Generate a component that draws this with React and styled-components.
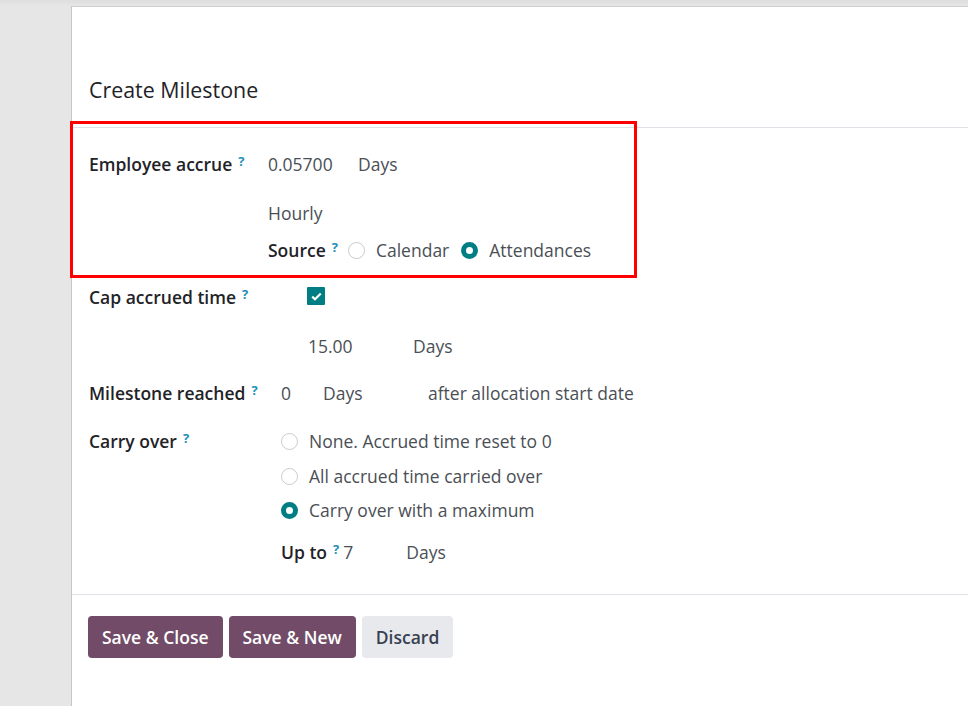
import React from "react";
import styled, { createGlobalStyle } from "styled-components";

const Global = createGlobalStyle`
  html, body { margin: 0; padding: 0; }
  body {
    background: #e6e6e6;
    font-family: "Open Sans", "Noto Sans", sans-serif;
    font-size: 17.5px;
    color: #495057;
    overflow: hidden;
  }
`;

const Page = styled.div`
  height: 706px;
  padding: 6px 0 0 71px;
  box-sizing: border-box;
  background: linear-gradient(#dedede, #e6e6e6 6px);
`;

const Modal = styled.div`
  background: #fff;
  border-left: 1px solid #c6c6c6;
  border-top: 1px solid #cfcfcf;
  height: 100%;
  box-sizing: border-box;
  display: flex;
  flex-direction: column;
`;

const Header = styled.div`
  height: 121px;
  box-sizing: border-box;
  display: flex;
  align-items: flex-end;
  padding: 0 17px 24px;
  border-bottom: 1px solid #dee2e6;
`;

const Title = styled.h4`
  margin: 0;
  font-size: 21.4px;
  line-height: 26px;
  font-weight: 500;
  color: #1f2328;
`;

const Body = styled.div`
  padding: 21px 17px 27px;
  border-bottom: 1px solid #dee2e6;
  display: flex;
  flex-direction: column;
`;

const Section = styled.div`
  position: relative;
  display: flex;
  flex-direction: column;
`;

const Highlight = styled.div`
  position: absolute;
  top: -28px;
  left: -19px;
  width: 567px;
  height: 157px;
  box-sizing: border-box;
  border: 3px solid #ff0000;
  pointer-events: none;
`;

const Line = styled.div`
  display: flex;
  align-items: ${(p) => (p.$top ? "flex-start" : "center")};
  height: ${(p) => (p.$top ? "auto" : "30px")};
  margin-top: ${(p) => p.$mt || 0}px;
  padding-left: ${(p) => p.$indent || 0}px;
`;

const Label = styled.div`
  width: ${(p) => p.$w}px;
  flex-shrink: 0;
  display: flex;
  align-items: center;
  height: 30px;
`;

const LabelText = styled.span`
  font-weight: 600;
  color: #1f2328;
  white-space: nowrap;
`;

const Help = styled.sup`
  color: #1b8fbb;
  font-weight: 700;
  font-size: 13px;
  margin-left: 6px;
  margin-right: ${(p) => p.$mr || 0}px;
  position: relative;
  top: -3px;
`;

const Value = styled.span`
  width: ${(p) => (p.$w ? `${p.$w}px` : "auto")};
  flex-shrink: 0;
  white-space: nowrap;
  color: #4a4f55;
`;

const Radio = styled.span`
  width: 17px;
  height: 17px;
  box-sizing: border-box;
  border-radius: 50%;
  flex-shrink: 0;
  border: ${(p) => (p.$on ? "5px solid #017e84" : "1px solid #c6cbd1")};
  background: #fff;
  margin-right: 11px;
  margin-left: ${(p) => p.$ml || 0}px;
`;

const Checkbox = styled.span`
  width: 18px;
  height: 18px;
  background: #017e84;
  border-radius: 1px;
  display: inline-flex;
  align-items: center;
  justify-content: center;
  margin-top: -2px;
`;

const Column = styled.div`
  display: flex;
  flex-direction: column;
`;

const Footer = styled.div`
  padding: 21px 16px;
  display: flex;
  gap: 6px;
`;

const Button = styled.button`
  height: 42px;
  padding: 0 14px;
  border: none;
  border-radius: 4px;
  font-family: inherit;
  font-size: 17.5px;
  font-weight: 600;
  cursor: pointer;
  background: ${(p) => (p.$primary ? "#714b67" : "#e7e9ed")};
  color: ${(p) => (p.$primary ? "#fff" : "#374151")};
`;

export default function App() {
  return (
    <>
      <Global />
      <Page>
        <Modal>
          <Header>
            <Title>Create Milestone</Title>
          </Header>
          <Body>
            <Section>
              <Highlight />
              <Line>
                <Label $w={179}>
                  <LabelText>Employee accrue</LabelText>
                  <Help>?</Help>
                </Label>
                <Value $w={90}>0.05700</Value>
                <Value>Days</Value>
              </Line>
              <Line $mt={19} $indent={179}>
                <Value>Hourly</Value>
              </Line>
              <Line $mt={7} $indent={179}>
                <LabelText>Source</LabelText>
                <Help $mr={10}>?</Help>
                <Radio />
                <Value>Calendar</Value>
                <Radio $on $ml={12} />
                <Value>Attendances</Value>
              </Line>
            </Section>

            <Line $mt={17}>
              <Label $w={218}>
                <LabelText>Cap accrued time</LabelText>
                <Help>?</Help>
              </Label>
              <Checkbox>
                <svg width="11" height="9" viewBox="0 0 11 9">
                  <path d="M1.2 4.6 L4 7.3 L9.8 1.5" fill="none" stroke="#fff" strokeWidth="2.2" />
                </svg>
              </Checkbox>
            </Line>
            <Line $mt={19} $indent={219}>
              <Value $w={105}>15.00</Value>
              <Value>Days</Value>
            </Line>

            <Line $mt={17}>
              <Label $w={192}>
                <LabelText>Milestone reached</LabelText>
                <Help>?</Help>
              </Label>
              <Value $w={42}>0</Value>
              <Value $w={105}>Days</Value>
              <Value>after allocation start date</Value>
            </Line>

            <Line $mt={18} $top>
              <Label $w={192}>
                <LabelText>Carry over</LabelText>
                <Help>?</Help>
              </Label>
              <Column>
                <Line>
                  <Radio />
                  <Value>None. Accrued time reset to 0</Value>
                </Line>
                <Line $mt={5}>
                  <Radio />
                  <Value>All accrued time carried over</Value>
                </Line>
                <Line $mt={4}>
                  <Radio $on />
                  <Value>Carry over with a maximum</Value>
                </Line>
                <Line $mt={12}>
                  <LabelText>Up to</LabelText>
                  <Help $mr={4}>?</Help>
                  <Value $w={63}>7</Value>
                  <Value>Days</Value>
                </Line>
              </Column>
            </Line>
          </Body>
          <Footer>
            <Button $primary>Save &amp; Close</Button>
            <Button $primary>Save &amp; New</Button>
            <Button>Discard</Button>
          </Footer>
        </Modal>
      </Page>
    </>
  );
}
